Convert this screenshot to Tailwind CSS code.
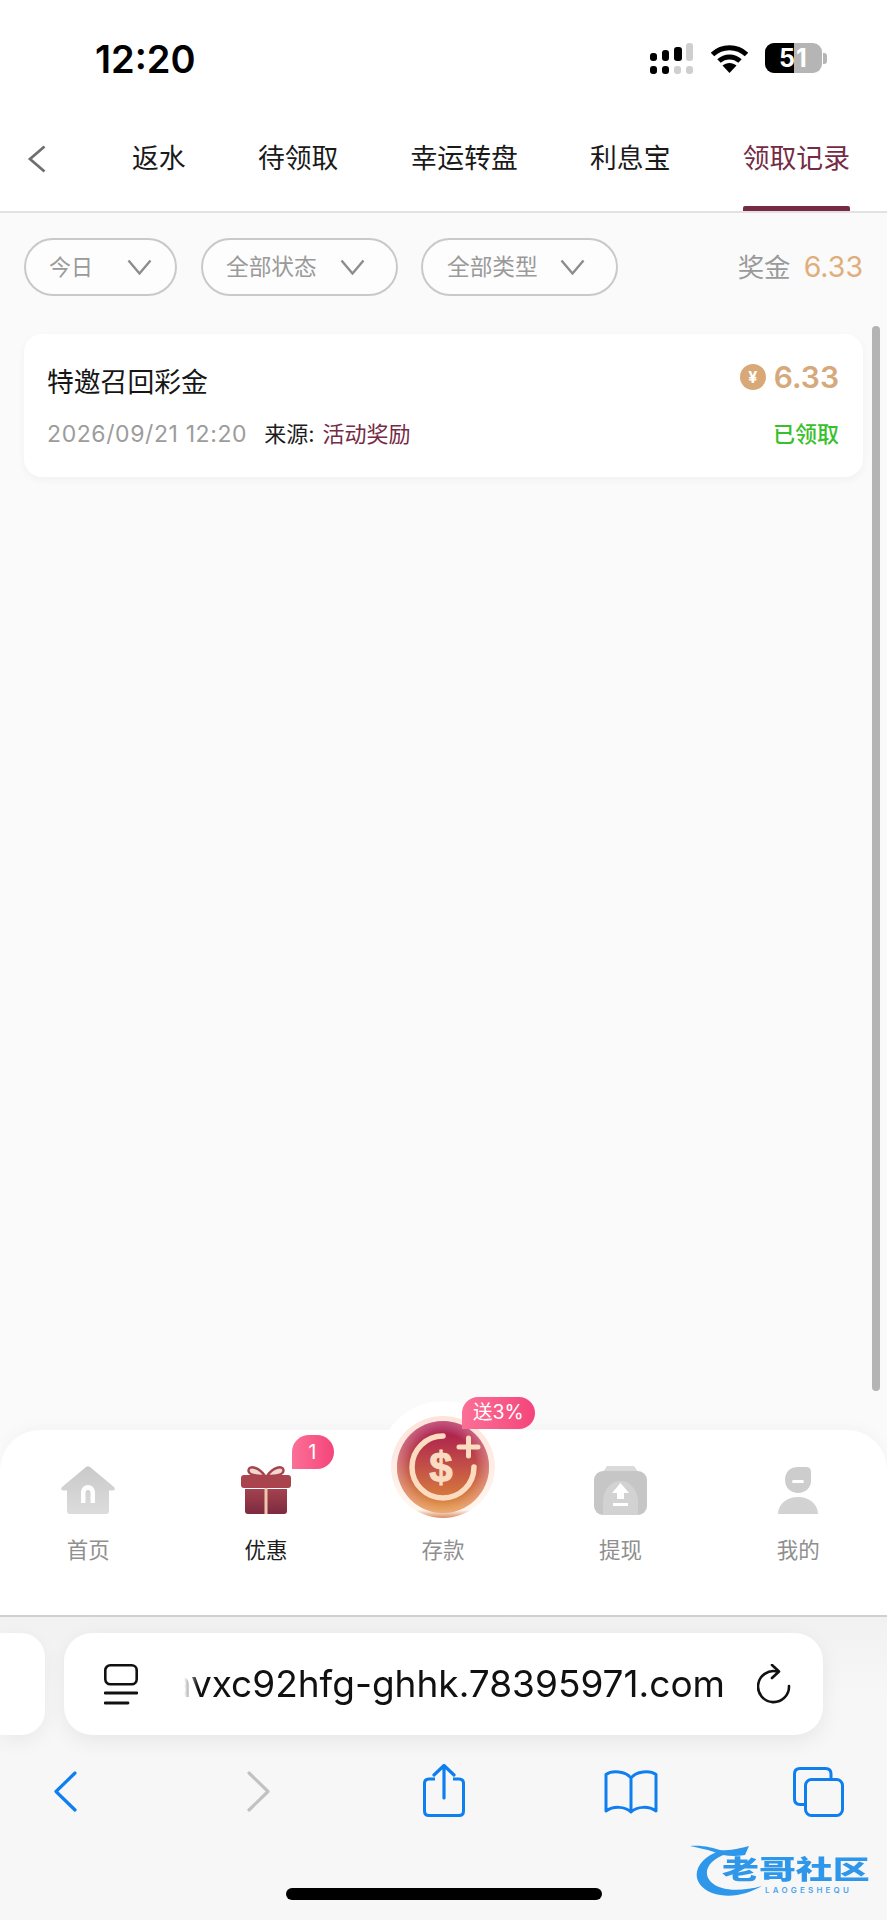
<!DOCTYPE html>
<html lang="zh">
<head>
<meta charset="utf-8">
<script src="https://cdn.jsdelivr.net/npm/@tailwindcss/browser@4"></script>
</head>
<body class="bg-[#fafafa]">
<div class="relative w-[887px] h-[1920px] overflow-hidden flex flex-col bg-[#fafafa] font-['Inter','Noto_Sans_CJK_SC',sans-serif]">

  <!-- header -->
  <header class="h-[213px] shrink-0 bg-white border-b-2 border-[#e2e2e2] flex flex-col">
    <div class="h-[120px] shrink-0 flex items-start pt-[37px]">
      <span class="ml-[95px] text-[38px] leading-[44px] font-semibold text-black">12:20</span>
      <div class="ml-auto mr-[60px] mt-[6px] flex items-start gap-[17px]">
        <svg width="44" height="31" viewBox="0 0 44 31" class="-ml-[1px]">
          <g fill="#000"><rect x="0" y="10" width="7" height="8" rx="3"/><rect x="12" y="7" width="7" height="11" rx="3"/><rect x="24" y="4" width="8" height="14" rx="3"/><rect x="0" y="23" width="7" height="8" rx="3"/><rect x="12" y="23" width="7" height="8" rx="3"/></g>
          <g fill="#cfcfcf"><rect x="36" y="0" width="7" height="18" rx="3"/><rect x="24" y="23" width="7" height="8" rx="3"/><rect x="36" y="23" width="7" height="8" rx="3"/></g>
        </svg>
        <svg width="37" height="28" viewBox="0 0 37 28" class="mt-[2px]">
          <path d="M1.5 9.5C11 0.5 26 0.5 35.5 9.5" fill="none" stroke="#000" stroke-width="5"/>
          <path d="M8 16C14 10.5 23 10.5 29 16" fill="none" stroke="#000" stroke-width="5"/>
          <path d="M18.5 28L11.5 20.5C15.5 17 21.5 17 25.5 20.5Z" fill="#000"/>
        </svg>
        <div class="relative flex items-center">
          <div class="relative w-[57px] h-[30px] rounded-[9px] overflow-hidden bg-[#b5b5b5] flex items-center justify-center">
            <div class="absolute left-0 top-0 bottom-0 w-[29px] bg-black"></div>
            <span class="relative text-white font-bold text-[25px] leading-[30px] tracking-[1px]">51</span>
          </div>
          <div class="w-[4px] h-[11px] ml-[1px] rounded-r-[3px] bg-[#b5b5b5]"></div>
        </div>
      </div>
    </div>
    <nav class="flex-1 relative flex items-start pt-[20px] text-[26.8px] leading-[36px] text-[#1a1a1a]">
      <svg width="20" height="28" viewBox="0 0 20 28" class="ml-[27px] mt-[5px]"><path d="M17.5 1.5L3 14L17.5 26.5" fill="none" stroke="#6f6f6f" stroke-width="2.8"/></svg>
      <div class="ml-[85px] flex gap-[72.300px]">
        <span>返水</span><span>待领取</span><span>幸运转盘</span><span>利息宝</span>
        <span class="relative text-[#752b45]">领取记录<i class="absolute left-0 right-0 top-[66px] h-[5px] rounded-t-[2px] bg-[#752b45]"></i></span>
      </div>
    </nav>
  </header>

  <!-- content -->
  <main class="flex-1 min-h-0 px-[24px] pt-[25px]">
    <div class="flex items-center">
      <div class="w-[153px] h-[58px] rounded-[29px] border-2 border-[#c9c9c9] bg-[#fdfdfd] flex items-center pl-[23px] gap-[34px] text-[22px] text-[#9a9a9a]">
        <span>今日</span>
        <svg width="25" height="16" viewBox="0 0 25 16"><path d="M1.5 1.5L12.5 14.500L23.5 1.500" fill="none" stroke="#8d8d8d" stroke-width="2.400"/></svg>
      </div>
      <div class="ml-[24px] w-[197px] h-[58px] rounded-[29px] border-2 border-[#c9c9c9] bg-[#fdfdfd] flex items-center pl-[23px] gap-[23px] text-[22.7px] text-[#9a9a9a]">
        <span>全部状态</span>
        <svg width="25" height="16" viewBox="0 0 25 16"><path d="M1.5 1.5L12.5 14.500L23.5 1.500" fill="none" stroke="#8d8d8d" stroke-width="2.400"/></svg>
      </div>
      <div class="ml-[23px] w-[197px] h-[58px] rounded-[29px] border-2 border-[#c9c9c9] bg-[#fdfdfd] flex items-center pl-[24px] gap-[22px] text-[22.7px] text-[#9a9a9a]">
        <span>全部类型</span>
        <svg width="25" height="16" viewBox="0 0 25 16"><path d="M1.5 1.5L12.5 14.500L23.5 1.500" fill="none" stroke="#8d8d8d" stroke-width="2.400"/></svg>
      </div>
      <div class="ml-auto flex items-center leading-[36px]">
        <span class="text-[26.500px] text-[#9a9a9a]">奖金</span>
        <span class="ml-[13px] text-[28.500px] text-[#dfae7a]">6.33</span>
      </div>
    </div>

    <div class="mt-[38px] w-[839px] h-[143px] rounded-[18px] bg-white shadow-[0_3px_8px_rgba(0,0,0,0.04)] pl-[23px] pr-[24px] pt-[28px] flex flex-col">
      <div class="flex items-start justify-between">
        <span class="text-[26.8px] leading-[40px] text-[#161616]">特邀召回彩金</span>
        <div class="flex items-center -mt-[3px]">
          <span class="w-[26px] h-[26px] rounded-full bg-[#d9a877] flex items-center justify-center text-white text-[16px] font-bold leading-none">¥</span>
          <span class="ml-[8px] text-[30px] leading-[36px] font-semibold text-[#d6a97c]">6.33</span>
        </div>
      </div>
      <div class="mt-[14px] flex items-center leading-[36px]">
        <span class="text-[23px] tracking-[0.6px] text-[#9c9c9c]">2026/09/21 12:20</span>
        <span class="ml-[17px] text-[22px] text-[#1c1c1c]">来源:</span>
        <span class="ml-[8px] text-[22px] text-[#752b45]">活动奖励</span>
        <span class="ml-auto text-[22px] font-medium text-[#38c02c]">已领取</span>
      </div>
    </div>
  </main>

  <!-- overlay scrollbar -->
  <div class="absolute left-[872px] top-[326px] w-[8px] h-[1065px] rounded-[4px] bg-[#b4b4b4]"></div>

  <!-- tab bar -->
  <div class="relative shrink-0 h-[187px] bg-white rounded-t-[40px] border-b-2 border-[#d0d0d0] shadow-[0_-5px_14px_rgba(0,0,0,0.025)] grid grid-cols-5 text-[21.5px] leading-[28px] text-[#8f8f8f]">
    <!-- bump behind the deposit button -->
    <div class="absolute left-[377px] top-[-29px] w-[134px] h-[134px] rounded-full bg-white"></div>

    <div class="relative flex flex-col items-center pt-[36px] -ml-[1px]">
      <svg width="54" height="49" viewBox="0 0 54 49">
        <defs><linearGradient id="h" x1="0" y1="0" x2="0" y2="1"><stop offset="0" stop-color="#c9c9c9"/><stop offset="1" stop-color="#dcdcdc"/></linearGradient></defs>
        <path d="M25 1Q27 -0.500 29 1L53 21Q55 24 52 24.500H48V45Q48 48 45 48H9Q6 48 6 45V24.500H2Q-1 24 1 21Z" fill="url(#h)"/>
        <path d="M20 37V26a7 7 0 0 1 14 0V37H29.5V26.5a2.5 2.5 0 0 0-5 0V37Z" fill="#fff"/>
      </svg>
      <span class="mt-[21px]">首页</span>
    </div>

    <div class="relative flex flex-col items-center pt-[36px]">
      <svg width="50" height="49" viewBox="0 0 50 49">
        <defs><linearGradient id="g" x1="0" y1="0" x2="0" y2="1"><stop offset="0" stop-color="#a4424f"/><stop offset="1" stop-color="#7d2a40"/></linearGradient></defs>
        <path d="M24 10C18 1 8 -1 7.5 4C7 9 15 10 24 10ZM26 10C32 1 42 -1 42.5 4C43 9 35 10 26 10Z" fill="#f3d6d0" stroke="#a4424f" stroke-width="2.4"/>
        <rect x="0" y="9" width="50" height="13" rx="3" fill="#a9444f"/>
        <path d="M4 23H46V45Q46 48 43 48H7Q4 48 4 45Z" fill="url(#g)"/>
        <rect x="23.5" y="22" width="3" height="26" fill="#f0c7ad"/>
      </svg>
      <span class="mt-[21px] text-[#1d1d1d]">优惠</span>
      <div class="absolute left-[115px] top-[5px] w-[42px] h-[34px] rounded-[17px] rounded-bl-none bg-gradient-to-r from-[#fb6f97] to-[#f4447b] flex items-center justify-center pr-[2px] text-white text-[20px] leading-none">1</div>
    </div>

    <div class="relative flex flex-col items-center pt-[36px] -ml-[1px]">
      <div class="h-[49px]"></div>
      <span class="mt-[21px]">存款</span>
      <svg width="104" height="102" viewBox="0 0 104 102" class="absolute left-[37px] top-[-14px]">
        <defs>
          <linearGradient id="d" x1="0" y1="0" x2="0" y2="1"><stop offset="0" stop-color="#a61350"/><stop offset="0.45" stop-color="#c04a48"/><stop offset="1" stop-color="#e09038"/></linearGradient>
          <linearGradient id="r" x1="0" y1="0" x2="0" y2="1"><stop offset="0" stop-color="#fde3da"/><stop offset="0.92" stop-color="#fff6f0"/><stop offset="1" stop-color="#d98a5e"/></linearGradient>
          <radialGradient id="e" cx="0.5" cy="0.5" r="0.5"><stop offset="0.72" stop-color="#fff" stop-opacity="0"/><stop offset="1" stop-color="#ffd6dc" stop-opacity="0.35"/></radialGradient>
        </defs>
        <ellipse cx="52" cy="51" rx="52" ry="51" fill="url(#r)"/>
        <circle cx="52" cy="51" r="46" fill="url(#d)"/>
        <circle cx="52" cy="51" r="46" fill="url(#e)"/>
        <path d="M52 20A31 31 0 1 0 83 51" fill="none" stroke="#fbdcc0" stroke-width="5.5" stroke-linecap="round"/>
        <text x="50" y="66" text-anchor="middle" font-family="Liberation Sans" font-weight="700" font-size="42" fill="#fbdcc0" stroke="#fbdcc0" stroke-width="1">$</text>
        <path d="M68 31H87M77.500 22V40" stroke="#fbdcc0" stroke-width="5" stroke-linecap="round"/>
      </svg>
      <div class="absolute left-[108px] top-[-33px] w-[73px] h-[32px] rounded-[16px] rounded-bl-none bg-gradient-to-r from-[#fb6f97] to-[#f4447b] flex items-center justify-center text-white text-[19.500px] leading-none">送3%</div>
    </div>

    <div class="relative flex flex-col items-center pt-[36px] -ml-[1px]">
      <svg width="53" height="49" viewBox="0 0 53 49">
        <path d="M9 6L13 0H40L44 6Z" fill="#dadada"/>
        <rect x="0" y="5" width="53" height="44" rx="9" fill="#c6c6c6"/>
        <path d="M9 49V36C9 24 17 15 26.500 15S44 24 44 36V49Z" fill="#d2d2d2"/>
        <path d="M26.500 17L35 27H30V33H23V27H18Z" fill="#fff"/>
        <rect x="19" y="37" width="15" height="3" fill="#fff"/>
      </svg>
      <span class="mt-[21px]">提现</span>
    </div>

    <div class="relative flex flex-col items-center pt-[36px]">
      <svg width="40" height="49" viewBox="0 0 40 49">
        <path d="M7 14C7 5 13 1 20 1H28Q33 1 33 6V15C33 22 27 27 20 27S7 22 7 14Z" fill="#cdcdcd"/>
        <rect x="14" y="14" width="12" height="3" rx="1.500" fill="#fff"/>
        <path d="M0 48C0 38 9 31 20 31S40 38 40 48Z" fill="#d2d2d2"/>
      </svg>
      <span class="mt-[21px]">我的</span>
    </div>
  </div>

  <!-- safari chrome -->
  <div class="relative shrink-0 h-[303px] bg-gradient-to-b from-[#f1f1f1] to-[#f7f7f8] to-[25%] pt-[16px]">
    <div class="flex h-[102px]">
      <div class="w-[45px] h-full rounded-r-[24px] bg-white shadow-[0_6px_20px_rgba(0,0,0,0.06)]"></div>
      <div class="ml-[19px] w-[759px] h-full rounded-[28px] bg-white shadow-[0_6px_22px_rgba(0,0,0,0.07)] flex items-center pl-[40px]">
        <svg width="34" height="41" viewBox="0 0 34 41" class="shrink-0">
          <rect x="1.300" y="1.300" width="31.400" height="19" rx="5" fill="none" stroke="#111" stroke-width="2.600"/>
          <path d="M1 29H33M1 39H24" stroke="#111" stroke-width="2.800" stroke-linecap="round"/>
        </svg>
        <div class="ml-[46px] w-[541px] overflow-hidden flex justify-end whitespace-nowrap text-[37px] leading-[50px] text-[#111] [mask-image:linear-gradient(to_right,transparent,black_14px)]">
          <span class="shrink-0">avxc92hfg-ghhk.78395971.com</span>
        </div>
        <svg width="34" height="40" viewBox="0 0 34 40" class="ml-[32px] shrink-0">
          <path d="M20 7.500A15.500 15.500 0 1 0 32 22" fill="none" stroke="#111" stroke-width="2.600" stroke-linecap="round"/>
          <path d="M15 1L22 7.500L15 14" fill="none" stroke="#111" stroke-width="2.600" stroke-linecap="round" stroke-linejoin="round"/>
        </svg>
      </div>
    </div>

    <div class="mt-[29px] h-[53px] flex items-center">
      <svg width="23" height="41" viewBox="0 0 23 41" class="ml-[54px] mt-[2px]"><path d="M21 2L2 20.500L21 39" fill="none" stroke="#0f7ff0" stroke-width="3.200" stroke-linecap="round" stroke-linejoin="round"/></svg>
      <svg width="23" height="41" viewBox="0 0 23 41" class="ml-[170px] mt-[2px]"><path d="M2 2L21 20.500L2 39" fill="none" stroke="#c2c2c2" stroke-width="3.200" stroke-linecap="round" stroke-linejoin="round"/></svg>
      <svg width="42" height="53" viewBox="0 0 42 53" class="ml-[153px]">
        <path d="M12 15H6Q1.500 15 1.500 19.500V47Q1.500 51.500 6 51.500H36Q40.500 51.500 40.500 47V19.500Q40.500 15 36 15H30" fill="none" stroke="#0f7ff0" stroke-width="3"/>
        <path d="M21 34V2M11 11L21 1.500L31 11" fill="none" stroke="#0f7ff0" stroke-width="3.200" stroke-linecap="round" stroke-linejoin="round"/>
      </svg>
      <svg width="54" height="44" viewBox="0 0 54 44" class="ml-[139px] mt-[2px]">
        <path d="M27 8C22 1 8 0 2 4.500V41C9 36 21 36 27 42C33 36 45 36 52 41V4.500C46 0 32 1 27 8ZM27 8V42" fill="none" stroke="#0f7ff0" stroke-width="3" stroke-linejoin="round"/>
      </svg>
      <svg width="51" height="50" viewBox="0 0 51 50" class="ml-[135px] mt-[2px]">
        <path d="M38 11V7Q38 1.500 32.500 1.500H7Q1.500 1.500 1.500 7V32Q1.500 37.500 7 37.500H12" fill="none" stroke="#0f7ff0" stroke-width="3"/>
        <rect x="12.500" y="12.500" width="37" height="36" rx="6" fill="none" stroke="#0f7ff0" stroke-width="3"/>
      </svg>
    </div>

    <div class="mt-[71px] ml-[286px] w-[316px] h-[12px] rounded-full bg-black"></div>

    <!-- watermark -->
    <div class="absolute left-[690px] top-[225px] w-[190px] h-[56px]">
      <svg width="80" height="56" viewBox="0 0 80 56" class="absolute left-0 top-0">
        <path d="M30 9C6 16 -4 40 22 51C40 57 58 52 72 44C50 50 30 49 21 40C12 31 18 18 36 12Z" fill="#2f97ea"/>
        <path d="M0 4C14 3 22 6 30 8C42 9 50 6 59 4L55 13C44 15 32 14 24 10C16 7 8 6 0 4Z" fill="#2f97ea"/>
      </svg>
      <span class="absolute left-[32px] top-[12px] origin-left scale-x-[1.42] text-[26px] leading-[28px] font-black text-[#2f97ea] font-['Noto_Sans_CJK_SC',sans-serif] whitespace-nowrap">老哥社区</span>
      <span class="absolute left-[75px] top-[44px] text-[8px] leading-[9px] font-semibold tracking-[3.200px] text-[#4aa6ee] whitespace-nowrap">LAOGESHEQU</span>
    </div>
  </div>
</div>
</body>
</html>
